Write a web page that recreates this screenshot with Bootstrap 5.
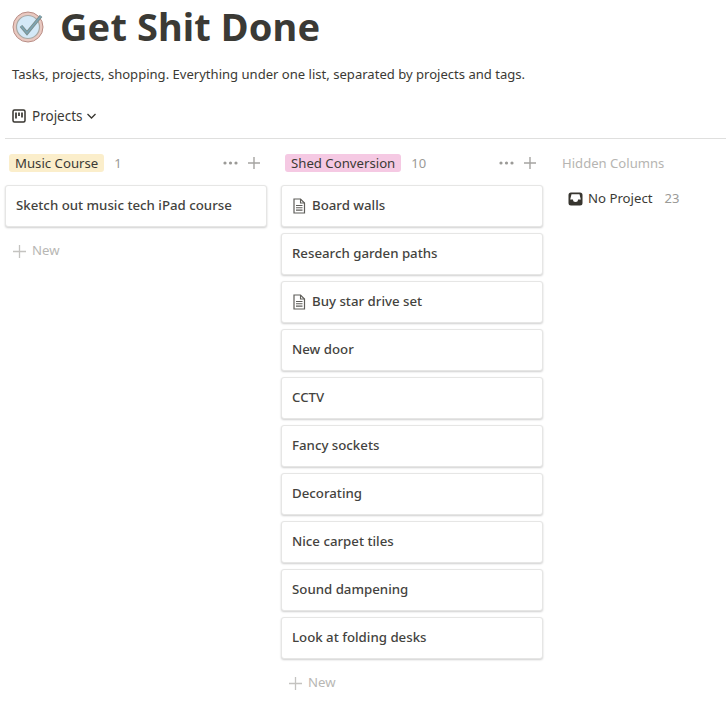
<!DOCTYPE html>
<html lang="en">
<head>
<meta charset="utf-8">
<title>Get Shit Done</title>
<link rel="stylesheet" href="https://cdn.jsdelivr.net/npm/bootstrap@5.3.0/dist/css/bootstrap.min.css">
<style>
html,body{height:708px;overflow:hidden}
body{font-family:"Noto Sans","Open Sans",sans-serif;color:#3b3a35;background:#fff;font-size:14px;padding:0}
.page-head{padding:0 0 0 12px;height:52px}
.page-title{font-size:38px;font-weight:700;line-height:54px;margin:0;letter-spacing:.1px}
.page-logo{width:33px;height:33px;margin-right:15px}
.page-desc{font-size:13.07px;line-height:20px;margin:12px 0 0 12px;height:20px;white-space:nowrap}
.view-bar{height:33px;margin:22px 0 0 5px;padding:0 0 0 7px;border-bottom:1px solid #dfdfde;width:721px;align-items:flex-start}
.view-name{font-size:13.5px;line-height:20px;margin-left:6px}
.board{margin:0 0 0 5px;padding-top:13px;gap:14px}
.board-col{width:262px;flex:none}
.hidden-col{padding-left:5px}
.col-head{height:33px;padding:2px 6px 0 4px}
.tag-pill{font-size:13.2px;line-height:18px;padding:0 6px;border-radius:3px}
.tag-yellow{background:#fbeecb}
.tag-pink{background:#f5c9e3}
.col-count{color:#9b9a97;font-size:13px;margin-left:10px}
.hidden-title{color:#b6b5b2;font-size:13.1px;line-height:18px;height:33px;padding-top:2px}
.task-card{height:42px;margin-bottom:6px;padding:0 10px;border:1px solid #e6e6e5;border-radius:3px;background:#fff;box-shadow:0 1px 2px rgba(15,15,15,.2);font-size:13.26px;font-weight:500;color:#44433e;align-items:center;white-space:nowrap}
.doc-icon{width:14px;height:16px;margin-right:6px;flex:none}
.new-row{color:#b8b7b4;font-size:13.2px;height:36px;padding-left:8px}
.new-row svg{margin-right:6px}
.hidden-row{height:28px;padding-left:6px;font-size:13.2px}
.hidden-row svg{margin-right:5px}
.hidden-row .col-count{margin-left:12px}
.head-tools{gap:9px}
</style>
</head>
<body>
<header class="page-head d-flex align-items-center">
  <svg class="page-logo" viewBox="0 0 33 33" aria-hidden="true">
    <circle cx="16" cy="17" r="15" fill="#e9c9c1" stroke="#b98d85" stroke-width="1"/>
    <circle cx="16" cy="17" r="11.5" fill="#d4e9f7" stroke="#a9a9a4" stroke-width="1.2"/>
    <path d="M9 16l6 7L29 6" fill="none" stroke="#7d8f8c" stroke-width="3.4"/>
    <path d="M9 16l6 7L29 6" fill="none" stroke="#7ea5b4" stroke-width="1.6"/>
  </svg>
  <h1 class="page-title">Get Shit Done</h1>
</header>
<p class="page-desc">Tasks, projects, shopping. Everything under one list, separated by projects and tags.</p>
<div class="view-bar d-flex">
  <div class="d-flex align-items-center">
    <svg width="14" height="14" viewBox="0 0 14 14" aria-hidden="true"><rect x="1" y="1" width="12" height="12" rx="1.5" fill="none" stroke="#37352f" stroke-width="1.5"/><path d="M4 3.5v6M7 3.5v3.5M10 3.5v5" stroke="#37352f" stroke-width="1.7" fill="none"/></svg>
    <span class="view-name">Projects</span>
    <svg class="ms-1" width="9" height="6" viewBox="0 0 9 6" aria-hidden="true"><path d="M.5 1l4 4 4-4" fill="none" stroke="#37352f" stroke-width="1.3"/></svg>
  </div>
</div>
<main class="board d-flex">
  <section class="board-col">
    <div class="col-head d-flex align-items-start">
      <span class="tag-pill tag-yellow">Music Course</span><span class="col-count">1</span>
      <div class="head-tools d-flex align-items-center ms-auto">
        <svg width="15" height="18" viewBox="0 0 15 18" aria-hidden="true"><g fill="#9b9a97"><circle cx="2" cy="9" r="1.6"/><circle cx="7.5" cy="9" r="1.6"/><circle cx="13" cy="9" r="1.6"/></g></svg>
        <svg width="14" height="18" viewBox="0 0 14 18" aria-hidden="true"><path d="M7 3v12M1 9h12" stroke="#a5a4a1" stroke-width="1.4"/></svg>
      </div>
    </div>
    <div class="task-card d-flex">Sketch out music tech iPad course</div>
    <div class="new-row d-flex align-items-center"><svg width="13" height="13" viewBox="0 0 13 13" aria-hidden="true"><path d="M6.5 0v13M0 6.5h13" stroke="#c4c3c0" stroke-width="1.3"/></svg>New</div>
  </section>
  <section class="board-col">
    <div class="col-head d-flex align-items-start">
      <span class="tag-pill tag-pink">Shed Conversion</span><span class="col-count">10</span>
      <div class="head-tools d-flex align-items-center ms-auto">
        <svg width="15" height="18" viewBox="0 0 15 18" aria-hidden="true"><g fill="#9b9a97"><circle cx="2" cy="9" r="1.6"/><circle cx="7.5" cy="9" r="1.6"/><circle cx="13" cy="9" r="1.6"/></g></svg>
        <svg width="14" height="18" viewBox="0 0 14 18" aria-hidden="true"><path d="M7 3v12M1 9h12" stroke="#a5a4a1" stroke-width="1.4"/></svg>
      </div>
    </div>
    <div class="task-card d-flex"><svg class="doc-icon" viewBox="0 0 14 16" aria-hidden="true"><path d="M2 1h6.500L12.500 5v10H2z" fill="#fff" stroke="#5f5e5a" stroke-width="1.2"/><path d="M8.500 1v4h4M4 7.500h6.500M4 9.800h6.500M4 12.100h6.500" fill="none" stroke="#5f5e5a" stroke-width="1.100"/></svg>Board walls</div>
    <div class="task-card d-flex">Research garden paths</div>
    <div class="task-card d-flex"><svg class="doc-icon" viewBox="0 0 14 16" aria-hidden="true"><path d="M2 1h6.500L12.500 5v10H2z" fill="#fff" stroke="#5f5e5a" stroke-width="1.2"/><path d="M8.500 1v4h4M4 7.500h6.500M4 9.800h6.500M4 12.100h6.500" fill="none" stroke="#5f5e5a" stroke-width="1.100"/></svg>Buy star drive set</div>
    <div class="task-card d-flex">New door</div>
    <div class="task-card d-flex">CCTV</div>
    <div class="task-card d-flex">Fancy sockets</div>
    <div class="task-card d-flex">Decorating</div>
    <div class="task-card d-flex">Nice carpet tiles</div>
    <div class="task-card d-flex">Sound dampening</div>
    <div class="task-card d-flex">Look at folding desks</div>
    <div class="new-row d-flex align-items-center"><svg width="13" height="13" viewBox="0 0 13 13" aria-hidden="true"><path d="M6.500 0v13M0 6.500h13" stroke="#c4c3c0" stroke-width="1.3"/></svg>New</div>
  </section>
  <section class="hidden-col flex-grow-1">
    <div class="hidden-title">Hidden Columns</div>
    <div class="hidden-row d-flex align-items-center"><svg width="15" height="14" viewBox="0 0 15 14" aria-hidden="true"><path d="M3 .5h9a2.500 2.500 0 0 1 2.500 2.500v8a2.500 2.500 0 0 1-2.500 2.500H3A2.500 2.500 0 0 1 .5 11V3A2.500 2.500 0 0 1 3 .5z" fill="#37352f"/><path d="M3.500 2.200h8l1.300 5.300H10a2.500 2.500 0 0 1-5 0H2.200z" fill="#fff"/></svg>No Project<span class="col-count">23</span></div>
  </section>
</main>
</body>
</html>
